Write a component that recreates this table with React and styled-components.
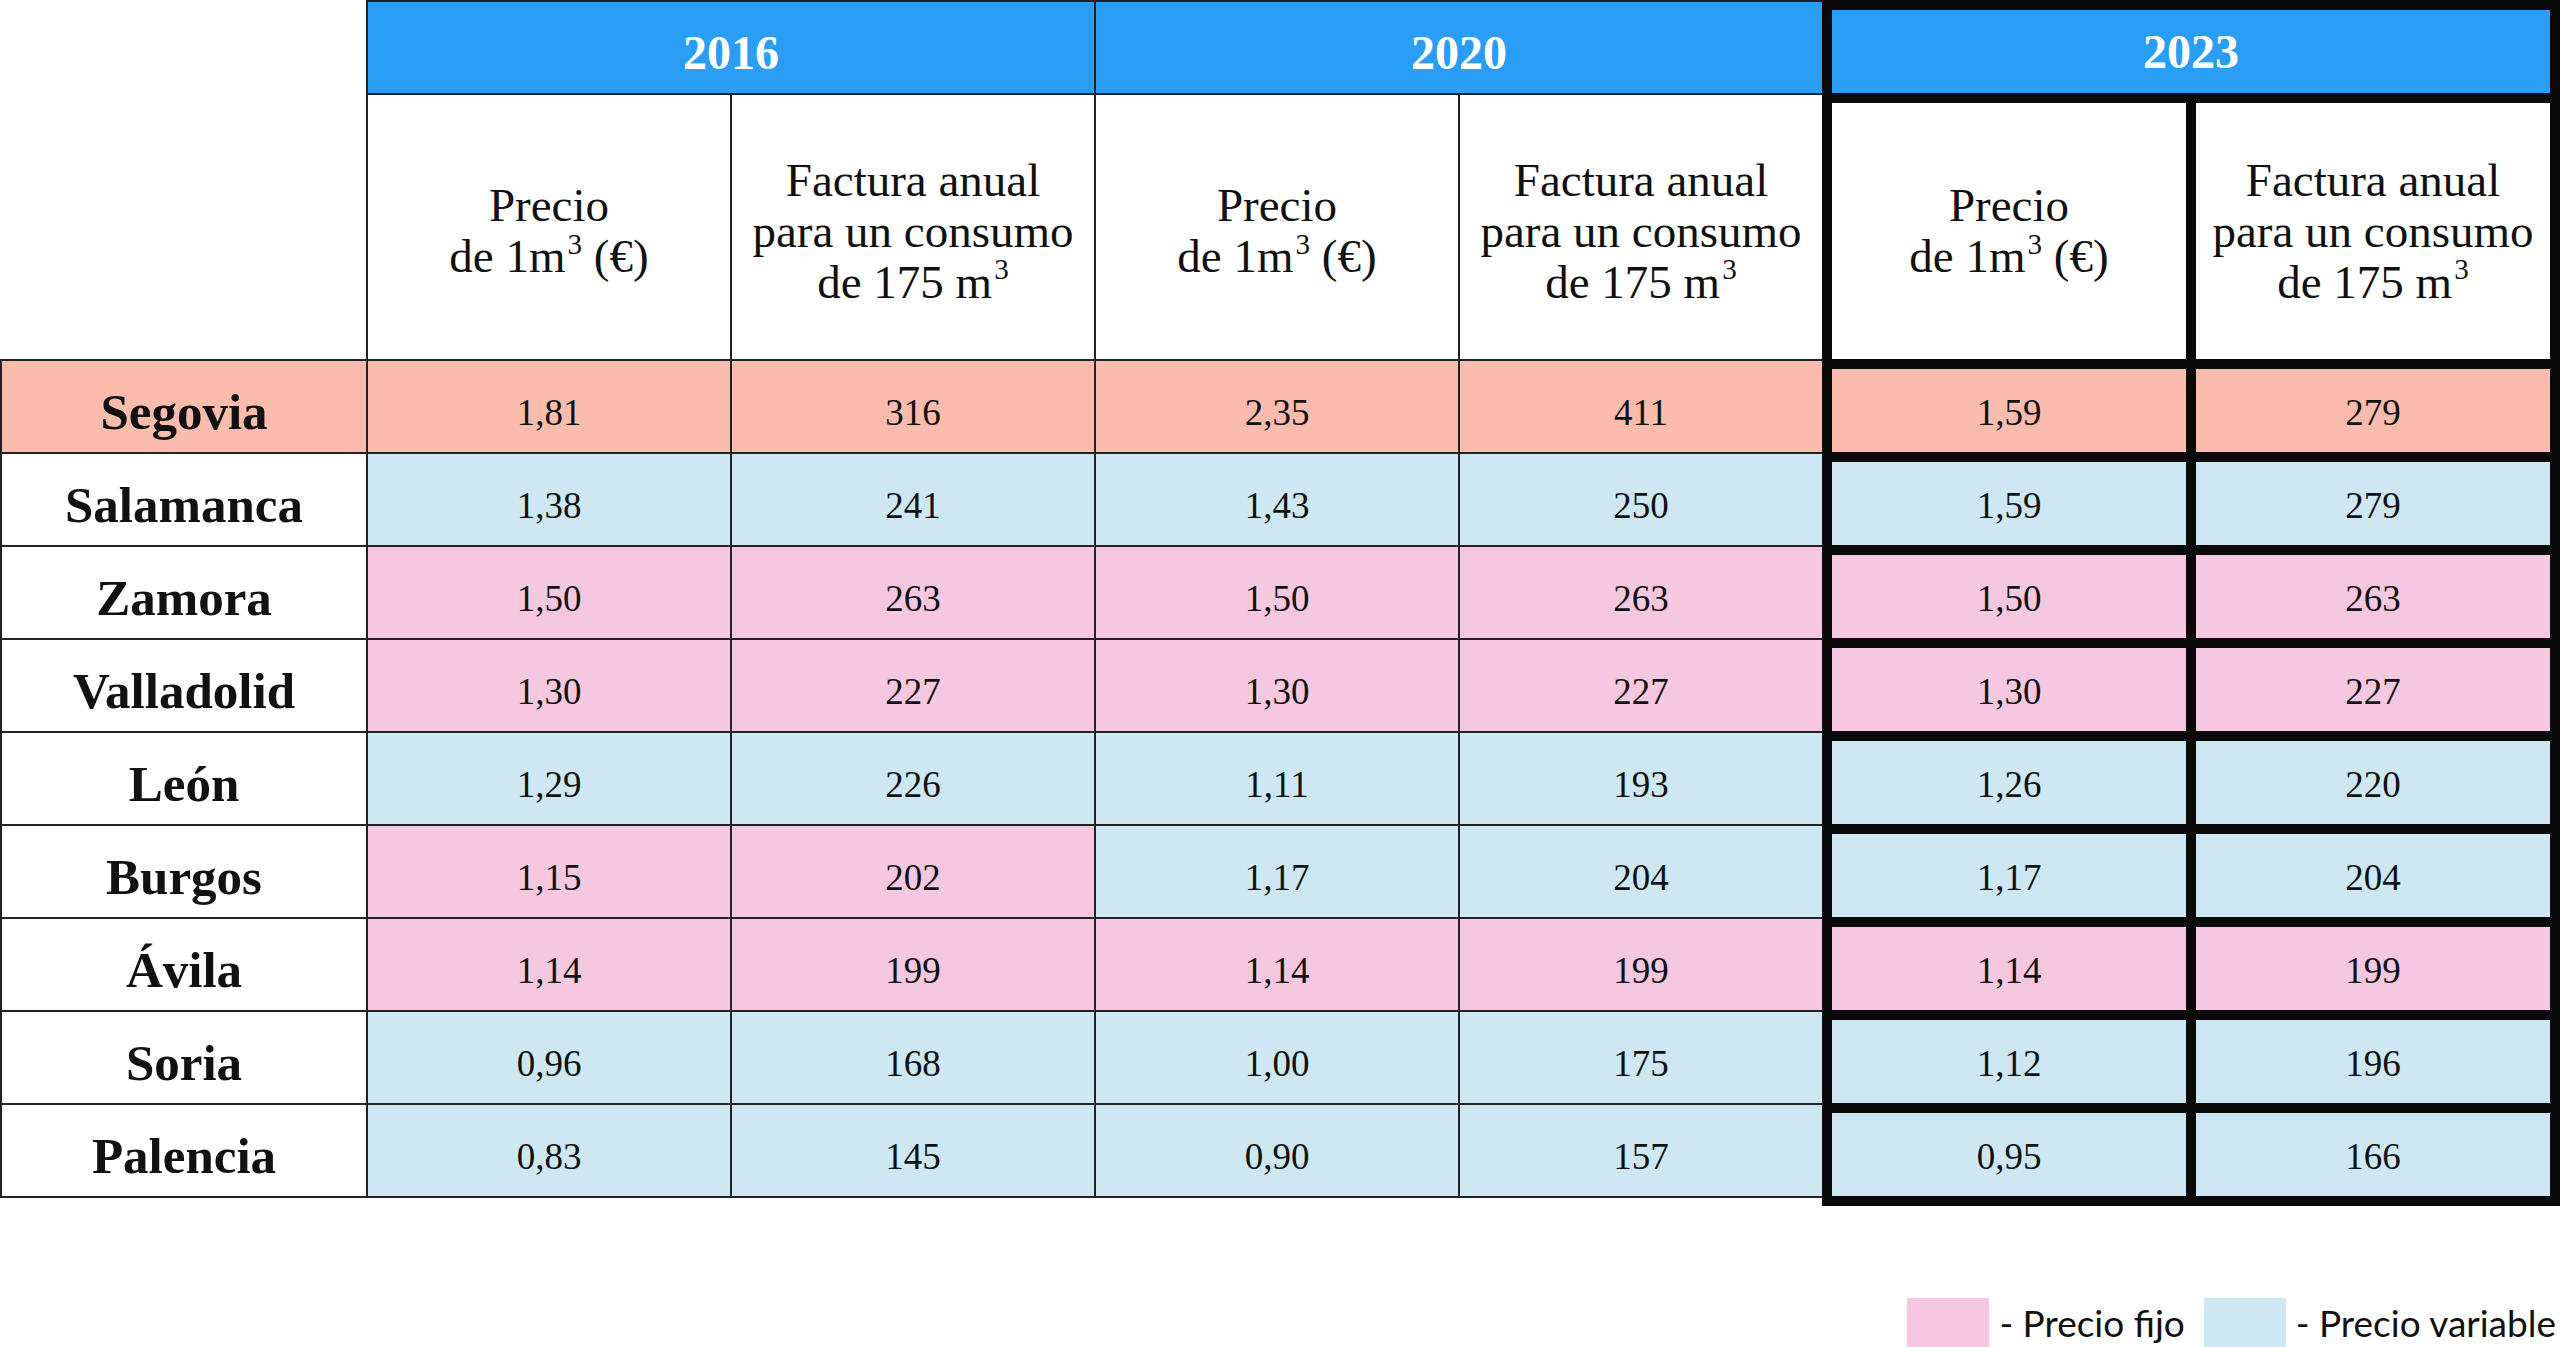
import { createGlobalStyle, styled } from 'styled-components';

// colores de la tabla
const LINE = '#222';
const HEAVY = '#0a0a0a';
const TONES = {
  salmon: '#fbbcad',
  fijo: '#f6c8e0',
  variable: '#cde8f3',
  white: '#ffffff',
};

const GlobalStyle = createGlobalStyle`
  html, body {
    margin: 0;
    padding: 0;
    background: #fff;
  }
  body {
    font-family: "Liberation Serif", "Times New Roman", serif;
    color: #111;
  }
`;

const Page = styled.div`
  width: 2560px;
  height: 1347px;
  overflow: hidden;
  display: flex;
  flex-direction: column;
  background: #fff;
`;

const Table = styled.div`
  display: flex;
  align-items: flex-start;
`;

const LabelColumn = styled.div`
  display: flex;
  flex-direction: column;
  width: 366px;
`;

const Corner = styled.div`
  height: 359px;
`;

const LabelGrid = styled.div`
  display: grid;
  grid-template-rows: repeat(9, 91px);
  gap: 2px;
  padding: 2px 0 2px 2px;
  background: ${LINE};
`;

const LabelCell = styled.div`
  display: flex;
  align-items: center;
  justify-content: center;
  padding-top: 10px;
  box-sizing: border-box;
  background: ${({ $tone }) => TONES[$tone]};
  font-size: 51px;
  font-weight: 700;
`;

const YearGroup = styled.div`
  display: grid;
  grid-template-columns: 1fr 1fr;
  grid-template-rows: ${({ $highlight }) =>
    $highlight ? '83px 256px repeat(9, 83px)' : '91px 264px repeat(9, 91px)'};
  gap: ${({ $highlight }) => ($highlight ? '10px' : '2px')};
  padding: ${({ $highlight }) => ($highlight ? '10px' : '2px 0 2px 2px')};
  width: ${({ $highlight }) => ($highlight ? '738px' : '728px')};
  box-sizing: border-box;
  background: ${({ $highlight }) => ($highlight ? HEAVY : LINE)};
`;

const YearHeader = styled.div`
  grid-column: 1 / -1;
  display: flex;
  align-items: center;
  justify-content: center;
  padding-top: ${({ $highlight }) => ($highlight ? '0' : '9px')};
  box-sizing: border-box;
  background: #2a9df5;
  color: #fff;
  font-size: 48px;
  font-weight: 700;
`;

const SubHeader = styled.div`
  display: flex;
  align-items: center;
  justify-content: center;
  padding-top: ${({ $highlight }) => ($highlight ? '0' : '8px')};
  box-sizing: border-box;
  background: #fff;
`;

const HeaderText = styled.span`
  text-align: center;
  font-size: 47px;
  line-height: 51px;
  white-space: nowrap;
`;

const Sup = styled.sup`
  font-size: 0.62em;
  line-height: 0;
  vertical-align: 0.62em;
  margin-left: 2px;
`;

const DataCell = styled.div`
  display: flex;
  align-items: center;
  justify-content: center;
  padding-top: ${({ $highlight }) => ($highlight ? '4px' : '12px')};
  box-sizing: border-box;
  background: ${({ $tone }) => TONES[$tone]};
  font-size: 37px;
`;

const Legend = styled.div`
  margin-top: auto;
  display: flex;
  justify-content: flex-end;
  align-items: center;
  height: 49px;
  padding-right: 4px;
  font-family: Lato, "Open Sans", sans-serif;
  font-size: 37px;
  color: #111;
`;

const Swatch = styled.span`
  width: 82px;
  height: 49px;
  background: ${({ $tone }) => TONES[$tone]};
`;

const LegendText = styled.span`
  margin: 0 19px 0 10px;
  &:last-child {
    margin-right: 0;
  }
`;

const ROWS = [
  { name: 'Segovia', label: 'salmon', values: [['1,81', '316', 'salmon'], ['2,35', '411', 'salmon'], ['1,59', '279', 'salmon']] },
  { name: 'Salamanca', label: 'white', values: [['1,38', '241', 'variable'], ['1,43', '250', 'variable'], ['1,59', '279', 'variable']] },
  { name: 'Zamora', label: 'white', values: [['1,50', '263', 'fijo'], ['1,50', '263', 'fijo'], ['1,50', '263', 'fijo']] },
  { name: 'Valladolid', label: 'white', values: [['1,30', '227', 'fijo'], ['1,30', '227', 'fijo'], ['1,30', '227', 'fijo']] },
  { name: 'León', label: 'white', values: [['1,29', '226', 'variable'], ['1,11', '193', 'variable'], ['1,26', '220', 'variable']] },
  { name: 'Burgos', label: 'white', values: [['1,15', '202', 'fijo'], ['1,17', '204', 'variable'], ['1,17', '204', 'variable']] },
  { name: 'Ávila', label: 'white', values: [['1,14', '199', 'fijo'], ['1,14', '199', 'fijo'], ['1,14', '199', 'fijo']] },
  { name: 'Soria', label: 'white', values: [['0,96', '168', 'variable'], ['1,00', '175', 'variable'], ['1,12', '196', 'variable']] },
  { name: 'Palencia', label: 'white', values: [['0,83', '145', 'variable'], ['0,90', '157', 'variable'], ['0,95', '166', 'variable']] },
];

const YEARS = ['2016', '2020', '2023'];

const App = () => {
  return (
    <>
      <GlobalStyle />
      <Page>
        <Table>
          <LabelColumn>
            <Corner />
            <LabelGrid>
              {ROWS.map((row) => (
                <LabelCell key={row.name} $tone={row.label}>
                  {row.name}
                </LabelCell>
              ))}
            </LabelGrid>
          </LabelColumn>
          {YEARS.map((year, i) => {
            const highlight = year === '2023';
            return (
              <YearGroup key={year} $highlight={highlight}>
                <YearHeader $highlight={highlight}>{year}</YearHeader>
                <SubHeader $highlight={highlight}>
                  <HeaderText>
                    Precio
                    <br />
                    de 1m<Sup>3</Sup> (€)
                  </HeaderText>
                </SubHeader>
                <SubHeader $highlight={highlight}>
                  <HeaderText>
                    Factura anual
                    <br />
                    para un consumo
                    <br />
                    de 175 m<Sup>3</Sup>
                  </HeaderText>
                </SubHeader>
                {ROWS.map((row) => {
                  const [price, bill, tone] = row.values[i];
                  return [
                    <DataCell key={row.name + 'p'} $tone={tone} $highlight={highlight}>
                      {price}
                    </DataCell>,
                    <DataCell key={row.name + 'f'} $tone={tone} $highlight={highlight}>
                      {bill}
                    </DataCell>,
                  ];
                })}
              </YearGroup>
            );
          })}
        </Table>
        <Legend>
          <Swatch $tone="fijo" />
          <LegendText>- Precio fijo</LegendText>
          <Swatch $tone="variable" />
          <LegendText>- Precio variable</LegendText>
        </Legend>
      </Page>
    </>
  );
};

export default App;
